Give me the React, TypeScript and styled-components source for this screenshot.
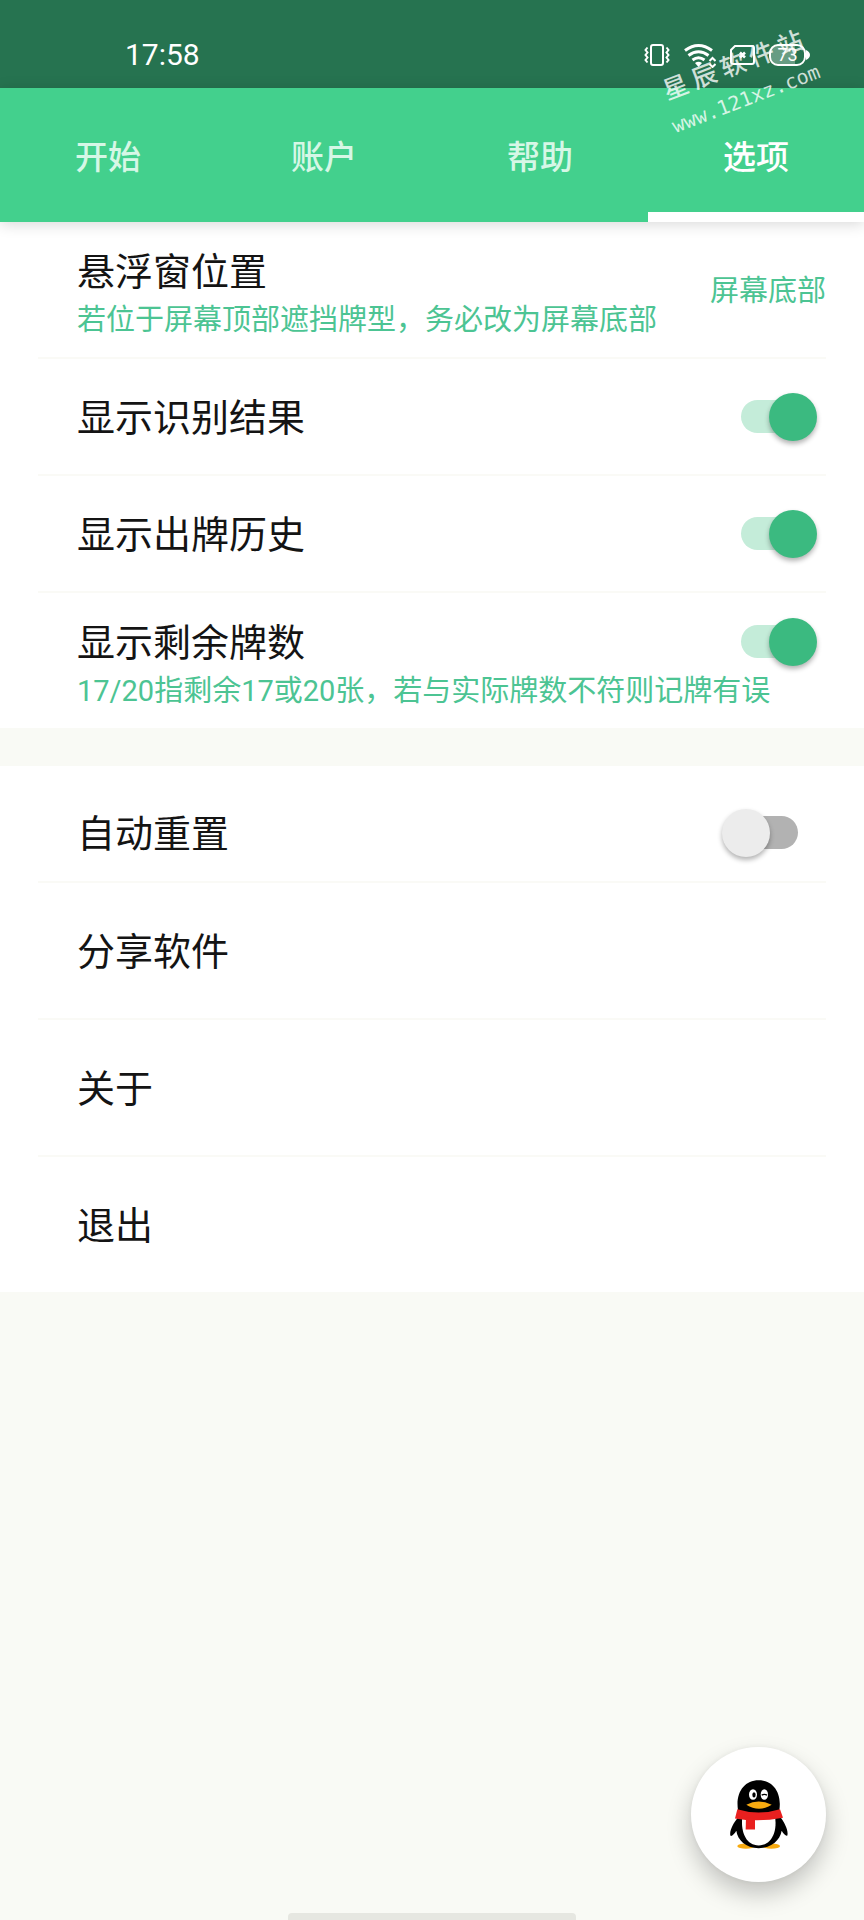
import React, { useState } from "react";
import styled, { createGlobalStyle } from "styled-components";

const GlobalStyle = createGlobalStyle`
  *, *::before, *::after { box-sizing: border-box; }
  body {
    margin: 0;
    background: #f9faf5;
    color: #141414;
    font-family: Roboto, "Noto Sans CJK SC", sans-serif;
  }
  button { font: inherit; color: inherit; border: 0; background: none; padding: 0; cursor: pointer; }
`;

const Page = styled.div`
  position: relative;
  min-height: 100vh;
  background: #f9faf5;
  overflow: hidden;
`;

const StatusBar = styled.header`
  display: flex;
  align-items: center;
  justify-content: space-between;
  height: 88px;
  padding: 22px 54px 0 125px;
  background: #267350;
  color: #fff;
`;

const Clock = styled.time`
  font-size: 30px;
  line-height: 40px;
`;

const StatusIcons = styled.div`
  display: flex;
  align-items: center;
  gap: 14px;
`;

const Battery = styled.div`
  display: flex;
  align-items: center;
  svg { display: block; }
`;

const BatteryLevel = styled.span`
  display: flex;
  align-items: center;
  justify-content: center;
  width: 37px;
  height: 22px;
  border: 2px solid #fff;
  border-radius: 9px;
  background: linear-gradient(90deg, #679c83 73%, transparent 73%);
  font-size: 18px;
  line-height: 18px;
`;

const TabBar = styled.nav`
  position: relative;
  display: grid;
  grid-template-columns: repeat(4, 1fr);
  height: 134px;
  background: #43d08d;
  box-shadow: 0 2px 14px rgba(0, 0, 0, 0.16);
`;

const Tab = styled.button<{ $active: boolean }>`
  && {
    border-top: 10px solid transparent;
    border-bottom: 10px solid ${(p) => (p.$active ? "#fff" : "transparent")};
    color: ${(p) => (p.$active ? "#fff" : "#d6f7e6")};
    font-size: 33px;
    font-weight: 500;
  }
`;

const Group = styled.section<{ $inset?: boolean }>`
  padding: ${(p) => (p.$inset ? 19 : 0)}px 38px 0;
  background: #fff;
  & + & { margin-top: 38px; }
  & > * { border-bottom: 2px solid #fafaf6; }
  & > *:last-child { border-bottom: 0; }
`;

const Row = styled.div<{ $height: number; $end?: number }>`
  display: flex;
  align-items: center;
  justify-content: space-between;
  min-height: ${(p) => p.$height}px;
  padding: 0 ${(p) => p.$end ?? 0}px 0 39px;
`;

const ActionRow = styled.button`
  display: flex;
  align-items: center;
  width: 100%;
  && {
    min-height: 137px;
    padding-left: 39px;
    border-bottom: 2px solid #fafaf6;
  }
  &&:last-child {
    min-height: 135px;
    border-bottom: 0;
  }
`;

const DetailRow = styled.div`
  display: flex;
  align-items: center;
  justify-content: space-between;
  padding-left: 39px;
`;

const DetailText = styled.div`
  flex: 1;
  padding: 24px 0 13px;
`;

const TitleLine = styled.div`
  display: flex;
  align-items: center;
  justify-content: space-between;
  height: 50px;
  padding-right: 9px;
`;

const Title = styled.label`
  display: block;
  padding-top: 2px;
  font-size: 38px;
  line-height: 48px;
`;

const Hint = styled.p`
  margin: 0;
  color: #4cc493;
  font-size: 29px;
  line-height: 48px;
`;

const Value = styled.button`
  && {
    padding-top: 2px;
    color: #4cc493;
    font-size: 29px;
    line-height: 48px;
  }
`;

const Toggle = styled.input`
  appearance: none;
  position: relative;
  width: 86px;
  height: 48px;
  margin: 0;
  cursor: pointer;
  &::before {
    content: "";
    position: absolute;
    inset: 7px 10px 8px;
    border-radius: 17px;
    background: #b2b2b2;
  }
  &::after {
    content: "";
    position: absolute;
    left: 0;
    top: 0;
    width: 48px;
    height: 48px;
    border-radius: 50%;
    background: #ececec;
    box-shadow: 0 3px 5px rgba(0, 0, 0, 0.3);
  }
  &:checked::before { background: #c4ecd9; }
  &:checked::after { left: 38px; background: #3bba80; }
`;

const ChatButton = styled.button`
  position: fixed;
  right: 38px;
  bottom: 38px;
  display: flex;
  align-items: center;
  justify-content: center;
  width: 135px;
  height: 135px;
  border-radius: 50%;
  && { background: #fff; }
  box-shadow: 0 12px 24px rgba(0, 0, 0, 0.22), 0 0 6px rgba(0, 0, 0, 0.06);
`;

const HomeHandle = styled.div`
  position: fixed;
  left: 50%;
  bottom: 0;
  width: 288px;
  height: 7px;
  margin-left: -144px;
  border-radius: 4px 4px 0 0;
  background: #e6e7e1;
`;

const Watermark = styled.div`
  position: absolute;
  top: 43px;
  right: 43px;
  width: 164px;
  transform: rotate(-21deg);
  color: rgba(255, 255, 255, 0.78);
  text-align: center;
  white-space: nowrap;
  line-height: 38px;
  pointer-events: none;
`;

const SiteName = styled.div`
  font-family: "Noto Sans CJK SC", sans-serif;
  font-size: 25px;
  font-weight: 500;
`;

const SiteAddress = styled.div`
  font-family: "DejaVu Sans Mono", monospace;
  font-size: 20px;
`;

const VibrateIcon = () => (
  <svg width="26" height="24" viewBox="0 0 26 24" fill="none" stroke="#fff" strokeWidth="2">
    <rect x="7" y="2" width="12" height="20" rx="2" />
    <path d="M3.500 4.500l-2 2.500 2 2.500-2 2.500 2 2.500-2 2.500 2 2.500M22.500 4.500l2 2.500-2 2.500 2 2.500-2 2.500 2 2.500-2 2.500" />
  </svg>
);

const WifiIcon = () => (
  <svg width="32" height="25" viewBox="0 0 32 25" fill="none" stroke="#fff" strokeWidth="3">
    <path d="M1 7.500q13.500-10 27 0M4.500 12.500q10-7.500 20 0M8.500 17q6-4.500 12 0" />
    <path d="M14.500 24l-3.500-4q3.500-2.500 7 0z" fill="#fff" stroke="none" />
    <path d="M25.500 18l3-3 3 3M25.500 21l3 3 3-3" strokeWidth="2" />
  </svg>
);

const SimIcon = () => (
  <svg width="25" height="20" viewBox="0 0 25 20" fill="none" stroke="#fff" strokeWidth="2">
    <path d="M5 1h17q2 0 2 2v14q0 2-2 2H3q-2 0-2-2V5z" />
    <path d="M10 7.500l5 5M15 7.500l-5 5" strokeWidth="2.500" />
  </svg>
);

const PenguinIcon = () => (
  <svg width="58" height="69" viewBox="180 180 174 206">
    <ellipse cx="228" cy="378" rx="26" ry="8" fill="#f8ab10" />
    <ellipse cx="304" cy="378" rx="26" ry="8" fill="#f8ab10" />
    <path d="M204 292C190 308 178 332 181 346c3 5 12-4 18-14 4 28 28 52 67 52s64-24 69-52c6 10 14 18 17 14 4-14-8-38-20-54l-4-22c8-52-18-90-62-90s-70 38-62 90z" fill="#000" />
    <path d="M217 290c-6 50 14 86 49 86s57-36 49-86z" fill="#fff" />
    <path d="M202 267q64 20 128 0l9 26q-74 14-144 2z" fill="#e9201f" />
    <path d="M228 292l27 2v34h-28z" fill="#e9201f" />
    <ellipse cx="249" cy="223" rx="12" ry="16" fill="#fff" />
    <ellipse cx="283" cy="223" rx="11" ry="16" fill="#fff" />
    <ellipse cx="252" cy="224" rx="5" ry="8" fill="#000" />
    <path d="M275 225q8-5 16 0" fill="none" stroke="#000" strokeWidth="4" />
    <path d="M229 254q37-20 76 0-38 24-76 0z" fill="#f8ab10" />
  </svg>
);

const TABS = ["开始", "账户", "帮助", "选项"];

export default function App() {
  const [tab, setTab] = useState("选项");
  return (
    <Page>
      <GlobalStyle />
      <StatusBar>
        <Clock>17:58</Clock>
        <StatusIcons>
          <VibrateIcon />
          <WifiIcon />
          <SimIcon />
          <Battery>
            <BatteryLevel>73</BatteryLevel>
            <svg width="4" height="10" viewBox="0 0 4 10"><path d="M0 0q4 2 4 5t-4 5z" fill="#fff" /></svg>
          </Battery>
        </StatusIcons>
      </StatusBar>

      <TabBar>
        {TABS.map((name) => (
          <Tab key={name} $active={name === tab} onClick={() => setTab(name)}>{name}</Tab>
        ))}
      </TabBar>

      <main>
        <Group>
          <DetailRow>
            <DetailText>
              <Title htmlFor="position">悬浮窗位置</Title>
              <Hint>若位于屏幕顶部遮挡牌型，务必改为屏幕底部</Hint>
            </DetailText>
            <Value id="position">屏幕底部</Value>
          </DetailRow>
          <Row $height={117} $end={9}>
            <Title htmlFor="result">显示识别结果</Title>
            <Toggle id="result" type="checkbox" defaultChecked />
          </Row>
          <Row $height={117} $end={9}>
            <Title htmlFor="history">显示出牌历史</Title>
            <Toggle id="history" type="checkbox" defaultChecked />
          </Row>
          <DetailRow>
            <DetailText>
              <TitleLine>
                <Title htmlFor="remaining">显示剩余牌数</Title>
                <Toggle id="remaining" type="checkbox" defaultChecked />
              </TitleLine>
              <Hint>17/20指剩余17或20张，若与实际牌数不符则记牌有误</Hint>
            </DetailText>
          </DetailRow>
        </Group>

        <Group $inset>
          <Row $height={98} $end={18}>
            <Title htmlFor="reset">自动重置</Title>
            <Toggle id="reset" type="checkbox" />
          </Row>
          <ActionRow><Title as="span">分享软件</Title></ActionRow>
          <ActionRow><Title as="span">关于</Title></ActionRow>
          <ActionRow><Title as="span">退出</Title></ActionRow>
        </Group>
      </main>

      <ChatButton aria-label="QQ"><PenguinIcon /></ChatButton>
      <HomeHandle />
      <Watermark>
        <SiteName>星 辰 软 件 站</SiteName>
        <SiteAddress>www.121xz.com</SiteAddress>
      </Watermark>
    </Page>
  );
}
